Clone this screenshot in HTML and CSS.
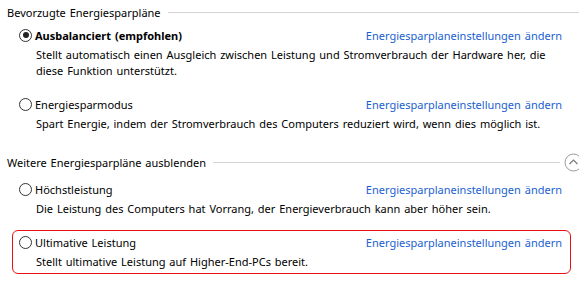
FILE: index.html
```html
<!DOCTYPE html>
<html lang="de">
<head>
    <meta charset="UTF-8">
    <title>Energiesparpläne</title>
    <link rel="stylesheet" href="styles.css">
</head>
<body>
    <div class="group-head">
        <span>Bevorzugte Energiesparpläne</span>
        <div class="rule"></div>
    </div>

    <div class="plan">
        <div class="plan-top">
            <label class="plan-name bold"><span class="radio checked"></span>Ausbalanciert (empfohlen)</label>
            <a href="#" class="plan-link">Energiesparplaneinstellungen ändern</a>
        </div>
        <p class="plan-desc">Stellt automatisch einen Ausgleich zwischen Leistung und Stromverbrauch der Hardware her, die diese Funktion unterstützt.</p>
    </div>

    <div class="plan">
        <div class="plan-top">
            <label class="plan-name"><span class="radio"></span>Energiesparmodus</label>
            <a href="#" class="plan-link">Energiesparplaneinstellungen ändern</a>
        </div>
        <p class="plan-desc">Spart Energie, indem der Stromverbrauch des Computers reduziert wird, wenn dies möglich ist.</p>
    </div>

    <div class="group-head more">
        <span>Weitere Energiesparpläne ausblenden</span>
        <div class="rule"></div>
        <button class="collapse">
            <svg width="19" height="19" viewBox="0 0 19 19">
                <circle cx="9.5" cy="9.5" r="8.5" fill="#fff" stroke="#9a9a9a"/>
                <path d="M5.5 11 L9.5 7 L13.5 11" fill="none" stroke="#7a7a7a" stroke-width="1.2"/>
            </svg>
        </button>
    </div>

    <div class="plan">
        <div class="plan-top">
            <label class="plan-name"><span class="radio"></span>Höchstleistung</label>
            <a href="#" class="plan-link">Energiesparplaneinstellungen ändern</a>
        </div>
        <p class="plan-desc">Die Leistung des Computers hat Vorrang, der Energieverbrauch kann aber höher sein.</p>
    </div>

    <div class="plan marked">
        <div class="plan-top">
            <label class="plan-name"><span class="radio"></span>Ultimative Leistung</label>
            <a href="#" class="plan-link">Energiesparplaneinstellungen ändern</a>
        </div>
        <p class="plan-desc">Stellt ultimative Leistung auf Higher-End-PCs bereit.</p>
    </div>
</body>
</html>
```

FILE: styles.css
```css
body {
    margin: 0;
    padding: 4px 0 0 7px;
    width: 572px;
    font-family: "Noto Sans", sans-serif;
    font-size: 11px;
    word-spacing: 1px;
    color: #000;
    background: #fff;
}
.group-head {
    display: flex;
    align-items: center;
    height: 17px;
    margin-bottom: 2px;
}
.group-head .rule {
    flex: 1;
    border-top: 1px solid #d4d4d4;
    margin-left: 7px;
}
.group-head.more {
    margin-top: 21px;
    margin-bottom: 6px;
    margin-right: -4px;
}
.collapse {
    border: none;
    background: none;
    padding: 0;
    margin-left: 4px;
    width: 19px;
    height: 19px;
}
.plan {
    margin-left: 5px;
    width: 551px;
    padding: 2px 0 0 6px;
    border: 1px solid transparent;
    border-radius: 6px;
    margin-bottom: 12px;
}
.plan.marked {
    border-color: #e81010;
    padding-bottom: 3px;
}
.plan-top {
    display: flex;
    justify-content: space-between;
    align-items: center;
    height: 18px;
}
.plan-name {
    display: flex;
    align-items: center;
}
.bold {
    font-weight: bold;
}
.radio {
    width: 11px;
    height: 11px;
    border: 1px solid #333;
    border-radius: 50%;
    margin-right: 3px;
    box-sizing: content-box;
    position: relative;
}
.radio.checked::after {
    content: "";
    position: absolute;
    left: 2.5px;
    top: 2.5px;
    width: 6px;
    height: 6px;
    border-radius: 50%;
    background: #222;
}
.plan-link {
    color: #1a5fd0;
    text-decoration: none;
    margin-right: 8px;
}
.plan-desc {
    margin: 3px 0 0 17px;
    line-height: 16px;
    color: #000;
}
```
